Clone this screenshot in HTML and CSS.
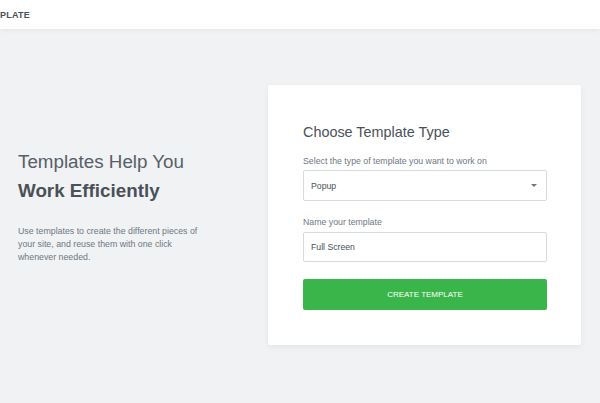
FILE: index.html
```html
<!DOCTYPE html>
<html lang="en">
<head>
<meta charset="utf-8">
<title>New Template</title>
<link rel="stylesheet" href="styles.css">
</head>
<body>
<header class="topbar">
  <span class="topbar-title">PLATE</span>
</header>
<main class="main">
  <section class="intro">
    <h1 class="intro-title">Templates Help You <strong>Work Efficiently</strong></h1>
    <p class="intro-text">Use templates to create the different pieces of<br>your site, and reuse them with one click<br>whenever needed.</p>
  </section>
  <form class="card">
    <h2 class="card-title">Choose Template Type</h2>
    <label class="field-label">Select the type of template you want to work on</label>
    <div class="select">
      <span>Popup</span>
      <span class="caret"></span>
    </div>
    <label class="field-label field-label-2">Name your template</label>
    <div class="input">Full Screen</div>
    <button type="button" class="btn">CREATE TEMPLATE</button>
  </form>
</main>
</body>
</html>
```

FILE: styles.css
```css
* { box-sizing: border-box; }
html, body { margin: 0; padding: 0; }
body {
  font-family: "Liberation Sans", Arial, sans-serif;
  background: #f1f2f4;
  color: #6d7882;
  height: 403px;
  overflow: hidden;
}
.topbar {
  height: 29px;
  background: #fff;
  box-shadow: 0 0 6px rgba(0,0,0,0.08);
  display: flex;
  align-items: center;
  position: relative;
  z-index: 1;
}
.topbar-title {
  font-size: 9px;
  font-weight: bold;
  color: #495157;
  letter-spacing: 0.2px;
}
.main {
  height: 374px;
  padding-bottom: 2px;
  display: flex;
  align-items: center;
}
.intro {
  width: 268px;
  padding-left: 18px;
  padding-right: 20px;
  margin-top: -19px;
}
.intro-title {
  margin: 0;
  font-size: 18.8px;
  line-height: 29px;
  font-weight: normal;
  color: #556068;
}
.intro-title strong {
  display: block;
  font-weight: bold;
  color: #495157;
}
.intro-text {
  margin: 20px 0 0;
  white-space: nowrap;
  font-size: 8.8px;
  line-height: 13px;
  color: #6d7882;
}
.card {
  width: 313px;
  background: #fff;
  box-shadow: 0 2px 6px rgba(0,0,0,0.06);
  border-radius: 2px;
  padding: 38px 34px 35px 35px;
  display: flex;
  flex-direction: column;
}
.card-title {
  margin: 0;
  font-size: 14.4px;
  line-height: 18px;
  font-weight: normal;
  color: #495157;
}
.field-label {
  margin-top: 14px;
  font-size: 8.75px;
  line-height: 12px;
  color: #6d7882;
}
.field-label-2 { margin-top: 15px; }
.select, .input {
  border: 1px solid #d5dadf;
  border-radius: 2px;
  padding: 0 7px;
  display: flex;
  align-items: center;
  font-size: 8.7px;
  color: #495157;
}
.select {
  margin-top: 3px;
  height: 31px;
  justify-content: space-between;
  padding-right: 9px;
}
.input {
  margin-top: 4px;
  height: 30px;
}
.caret {
  width: 0; height: 0;
  border-left: 3px solid transparent;
  border-right: 3px solid transparent;
  border-top: 3px solid #6d7882;
}
.btn {
  margin-top: 17px;
  height: 31px;
  border: 0;
  border-radius: 2px;
  background: #39b54a;
  color: #fff;
  font-family: inherit;
  font-size: 8px;
}
```
